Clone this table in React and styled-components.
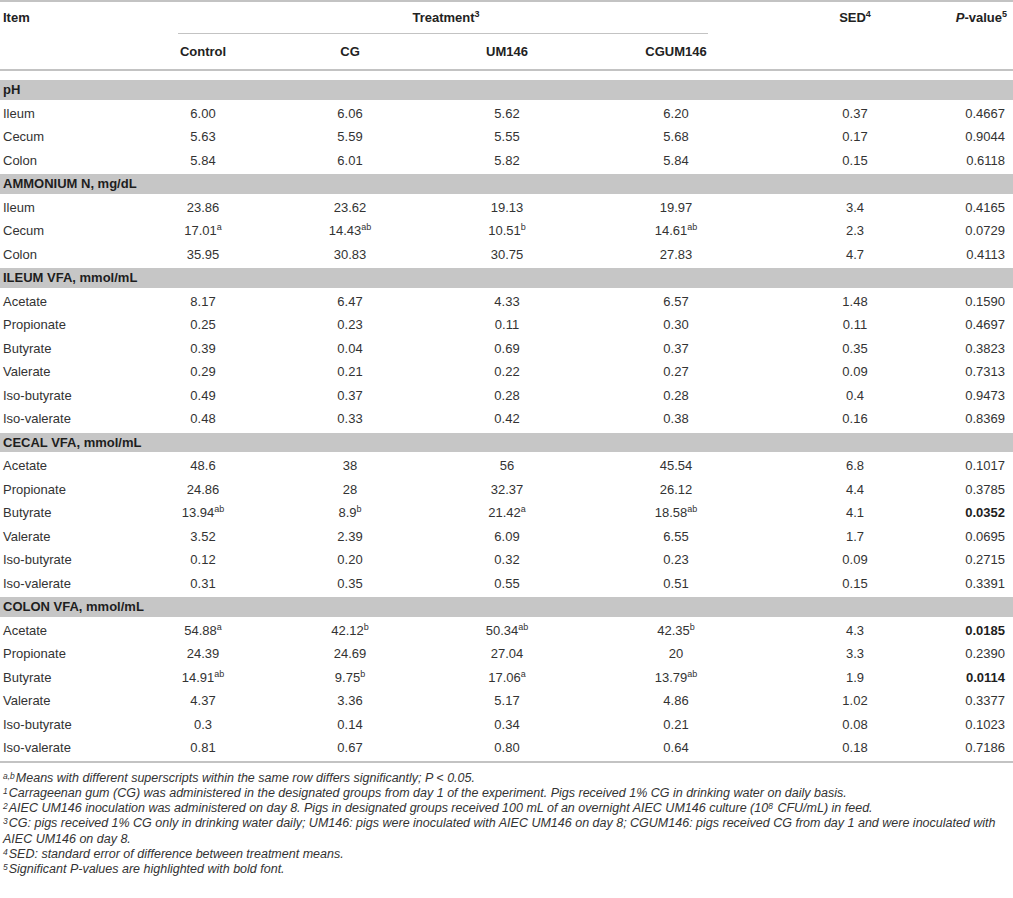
import React, { Fragment } from "react";
import styled, { createGlobalStyle } from "styled-components";

const GlobalStyle = createGlobalStyle`
  body {
    margin: 0;
    background: #ffffff;
    font-family: "Liberation Sans", Arial, sans-serif;
    color: #333333;
  }
`;

const COLS = "130px 146px 148px 166px 172px 186px 1fr";

const Page = styled.div`
  width: 1013px;
`;

const Rule = styled.div`
  height: 2px;
  background: #c3c3c3;
`;

const HeadRow = styled.div`
  display: grid;
  grid-template-columns: ${COLS};
  align-items: center;
  height: ${(p) => p.$h}px;
  font-size: 13px;
  font-weight: bold;
  color: #222222;
`;

const HeadCell = styled.div`
  grid-column: ${(p) => p.$col || "auto"};
  text-align: ${(p) => p.$align || "center"};
  padding: ${(p) => (p.$align === "left" ? "0 0 0 3px" : p.$align === "right" ? "0 6px 0 0" : "0")};
`;

const SpanRule = styled.div`
  grid-column: 2 / 6;
  margin: 0 54px 0 48px;
  height: 1px;
  background: #c3c3c3;
`;

const RuleRow = styled.div`
  display: grid;
  grid-template-columns: ${COLS};
`;

const Sup = styled.sup`
  font-size: 9px;
  line-height: 0;
  vertical-align: 5px;
`;

const Body = styled.div`
  padding: 7px 0 1px;
`;

const BandRow = styled.div`
  height: 23.5px;
  padding: 2px 0;
  box-sizing: border-box;
`;

const Band = styled.div`
  height: 100%;
  background: #c6c6c6;
  display: flex;
  align-items: center;
  padding-left: 3px;
  font-size: 13px;
  font-weight: bold;
  color: #1e1e1e;
`;

const DataRow = styled.div`
  display: grid;
  grid-template-columns: ${COLS};
  align-items: center;
  height: 23.5px;
  font-size: 13px;
  color: #333333;
`;

const Cell = styled.div`
  text-align: center;
  white-space: nowrap;
`;

const Label = styled(Cell)`
  text-align: left;
  padding-left: 3px;
`;

const PCell = styled(Cell)`
  text-align: right;
  padding-right: 8px;
  font-weight: ${(p) => (p.$bold ? "bold" : "normal")};
  color: ${(p) => (p.$bold ? "#1e1e1e" : "#333333")};
`;

const Notes = styled.div`
  padding: 8px 3px 0 3px;
  font-size: 12.5px;
  font-style: italic;
  line-height: 15.3px;
  color: #333333;
`;

const Note = styled.div``;

const NoteSup = styled.sup`
  font-size: 8.5px;
  line-height: 0;
  vertical-align: 3px;
  margin-right: 1px;
`;

const sections = [
  {
    title: "pH",
    rows: [
      ["Ileum", "6.00", "6.06", "5.62", "6.20", "0.37", "0.4667"],
      ["Cecum", "5.63", "5.59", "5.55", "5.68", "0.17", "0.9044"],
      ["Colon", "5.84", "6.01", "5.82", "5.84", "0.15", "0.6118"],
    ],
  },
  {
    title: "AMMONIUM N, mg/dL",
    rows: [
      ["Ileum", "23.86", "23.62", "19.13", "19.97", "3.4", "0.4165"],
      ["Cecum", "17.01|a", "14.43|ab", "10.51|b", "14.61|ab", "2.3", "0.0729"],
      ["Colon", "35.95", "30.83", "30.75", "27.83", "4.7", "0.4113"],
    ],
  },
  {
    title: "ILEUM VFA, mmol/mL",
    rows: [
      ["Acetate", "8.17", "6.47", "4.33", "6.57", "1.48", "0.1590"],
      ["Propionate", "0.25", "0.23", "0.11", "0.30", "0.11", "0.4697"],
      ["Butyrate", "0.39", "0.04", "0.69", "0.37", "0.35", "0.3823"],
      ["Valerate", "0.29", "0.21", "0.22", "0.27", "0.09", "0.7313"],
      ["Iso-butyrate", "0.49", "0.37", "0.28", "0.28", "0.4", "0.9473"],
      ["Iso-valerate", "0.48", "0.33", "0.42", "0.38", "0.16", "0.8369"],
    ],
  },
  {
    title: "CECAL VFA, mmol/mL",
    rows: [
      ["Acetate", "48.6", "38", "56", "45.54", "6.8", "0.1017"],
      ["Propionate", "24.86", "28", "32.37", "26.12", "4.4", "0.3785"],
      ["Butyrate", "13.94|ab", "8.9|b", "21.42|a", "18.58|ab", "4.1", "*0.0352"],
      ["Valerate", "3.52", "2.39", "6.09", "6.55", "1.7", "0.0695"],
      ["Iso-butyrate", "0.12", "0.20", "0.32", "0.23", "0.09", "0.2715"],
      ["Iso-valerate", "0.31", "0.35", "0.55", "0.51", "0.15", "0.3391"],
    ],
  },
  {
    title: "COLON VFA, mmol/mL",
    rows: [
      ["Acetate", "54.88|a", "42.12|b", "50.34|ab", "42.35|b", "4.3", "*0.0185"],
      ["Propionate", "24.39", "24.69", "27.04", "20", "3.3", "0.2390"],
      ["Butyrate", "14.91|ab", "9.75|b", "17.06|a", "13.79|ab", "1.9", "*0.0114"],
      ["Valerate", "4.37", "3.36", "5.17", "4.86", "1.02", "0.3377"],
      ["Iso-butyrate", "0.3", "0.14", "0.34", "0.21", "0.08", "0.1023"],
      ["Iso-valerate", "0.81", "0.67", "0.80", "0.64", "0.18", "0.7186"],
    ],
  },
];

const Value = ({ text }) => {
  const [num, sup] = text.split("|");
  return (
    <Cell>
      {num}
      {sup && <Sup>{sup}</Sup>}
    </Cell>
  );
};

export default function App() {
  return (
    <Page>
      <GlobalStyle />
      <Rule />
      <HeadRow $h={31}>
        <HeadCell $col="1" $align="left">Item</HeadCell>
        <HeadCell $col="2 / 6">
          Treatment<Sup>3</Sup>
        </HeadCell>
        <HeadCell $col="6">
          SED<Sup>4</Sup>
        </HeadCell>
        <HeadCell $col="7" $align="right">
          <i>P</i>-value<Sup>5</Sup>
        </HeadCell>
      </HeadRow>
      <RuleRow>
        <SpanRule />
      </RuleRow>
      <HeadRow $h={35}>
        <HeadCell $col="2">Control</HeadCell>
        <HeadCell $col="3">CG</HeadCell>
        <HeadCell $col="4">UM146</HeadCell>
        <HeadCell $col="5">CGUM146</HeadCell>
      </HeadRow>
      <Rule />
      <Body>
        {sections.map((s) => (
          <Fragment key={s.title}>
            <BandRow>
              <Band>{s.title}</Band>
            </BandRow>
            {s.rows.map((r) => {
              const p = r[6];
              const bold = p.startsWith("*");
              return (
                <DataRow key={s.title + r[0]}>
                  <Label>{r[0]}</Label>
                  {r.slice(1, 6).map((v, i) => (
                    <Value key={i} text={v} />
                  ))}
                  <PCell $bold={bold}>{bold ? p.slice(1) : p}</PCell>
                </DataRow>
              );
            })}
          </Fragment>
        ))}
      </Body>
      <Rule />
      <Notes>
        <Note>
          <NoteSup>a,b</NoteSup>Means with different superscripts within the same row differs significantly; P &lt; 0.05.
        </Note>
        <Note>
          <NoteSup>1</NoteSup>Carrageenan gum (CG) was administered in the designated groups from day 1 of the experiment. Pigs received 1% CG in drinking water on daily basis.
        </Note>
        <Note>
          <NoteSup>2</NoteSup>AIEC UM146 inoculation was administered on day 8. Pigs in designated groups received 100 mL of an overnight AIEC UM146 culture (10<NoteSup>8</NoteSup> CFU/mL) in feed.
        </Note>
        <Note>
          <NoteSup>3</NoteSup>CG: pigs received 1% CG only in drinking water daily; UM146: pigs were inoculated with AIEC UM146 on day 8; CGUM146: pigs received CG from day 1 and were inoculated with AIEC UM146 on day 8.
        </Note>
        <Note>
          <NoteSup>4</NoteSup>SED: standard error of difference between treatment means.
        </Note>
        <Note>
          <NoteSup>5</NoteSup>Significant P-values are highlighted with bold font.
        </Note>
      </Notes>
    </Page>
  );
}
